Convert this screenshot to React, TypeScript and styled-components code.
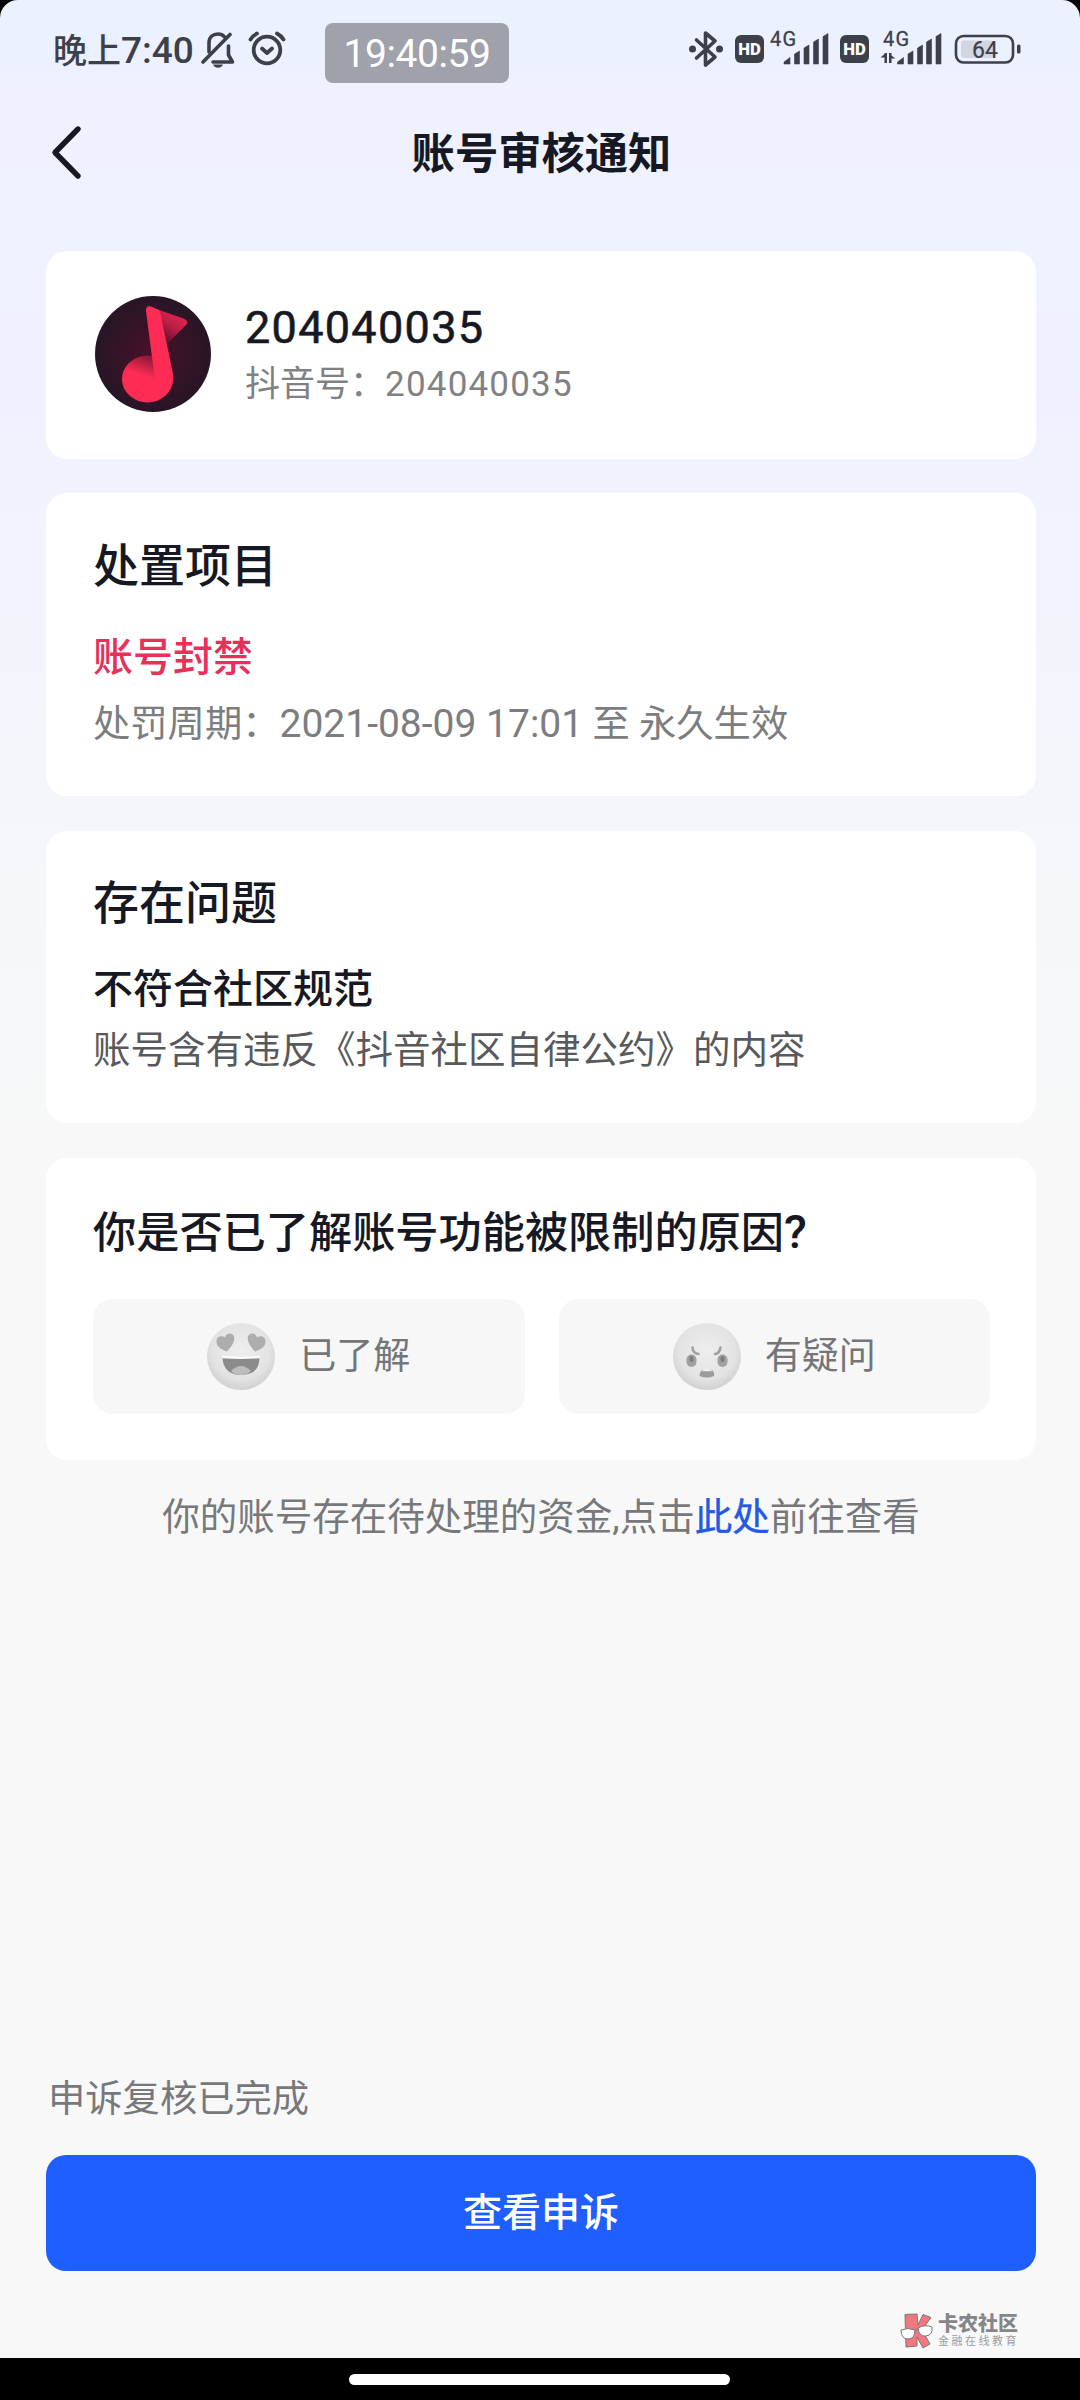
import React from "react";
import styled, { createGlobalStyle } from "styled-components";

const Global = createGlobalStyle`
  * { box-sizing: border-box; }
  html, body { margin: 0; padding: 0; background: #000; }
  body { font-family: Roboto, "Noto Sans CJK SC", sans-serif; }
`;

const Screen = styled.div`
  width: 1080px;
  height: 2400px;
  display: flex;
  flex-direction: column;
  background: #000;
`;

const Page = styled.div`
  height: 2358px;
  display: flex;
  flex-direction: column;
  border-radius: 18px 18px 0 0;
  overflow: hidden;
  background: linear-gradient(180deg, #eaf1ff 0, #edf1ff 70px, #eff1ff 82px, #eff2fe 400px, #f3f5fc 700px, #f7f8f9 1060px, #f8f8f8 1200px);
`;

const StatusBar = styled.header`
  display: flex;
  height: 98px;
  padding: 0 56px 0 53px;
  color: #3d4048;
`;

const Clock = styled.div`
  width: 148px;
  padding-top: 27px;
  font-size: 34px;
  line-height: 48px;
  font-weight: 500;
  white-space: nowrap;
`;

const StatusIcons = styled.div<{ $top: number }>`
  display: flex;
  gap: 13px;
  padding-top: ${(p) => p.$top}px;
`;

const TimePill = styled.div`
  width: 184px;
  height: 60px;
  margin: 23px auto 0 39px;
  border-radius: 8px;
  background: #9fa1ab;
  color: #fff;
  font-size: 39px;
  line-height: 62px;
  letter-spacing: -0.4px;
  text-align: center;
`;

const NavBar = styled.div`
  display: grid;
  grid-template-columns: 102px 1fr 99px;
  height: 153px;
  padding: 25px 0 0;
`;

const BackButton = styled.button`
  border: 0;
  padding: 0 0 0 51px;
  background: none;
  height: 60px;
  text-align: left;
`;

const NavTitle = styled.h1`
  margin: 0;
  font-size: 43.3px;
  line-height: 64px;
  font-weight: 700;
  color: #161823;
  text-align: center;
`;

const Content = styled.main`
  flex: 1;
  display: flex;
  flex-direction: column;
  padding: 0 44px 0 46px;
`;

const Card = styled.section<{ $h: number; $gap?: number }>`
  height: ${(p) => p.$h}px;
  margin-bottom: ${(p) => p.$gap ?? 34}px;
  padding: 0 46px 0 47px;
  border-radius: 21px;
  background: #fff;
`;

const Profile = styled.div`
  display: flex;
  align-items: center;
  gap: 34px;
  height: 206px;
  padding-left: 2px;
`;

const Name = styled.div`
  padding-top: 3px;
  font-size: 45px;
  line-height: 56px;
  font-weight: 400;
  letter-spacing: 1.3px;
  color: #161823;
  -webkit-text-stroke: 0.6px #161823;
`;

const Account = styled.div`
  padding-top: 3px;
  font-size: 35px;
  line-height: 52px;
  color: #808184;
`;

const Digits = styled.span<{ $size?: number; $space?: number }>`
  font-size: ${(p) => (p.$size ? p.$size + "px" : "inherit")};
  line-height: 1;
  letter-spacing: ${(p) => p.$space ?? 0}px;
`;

const Text = styled.p<{ $top?: number; $size: number; $weight?: number; $color: string }>`
  margin: 0;
  padding-top: ${(p) => p.$top ?? 0}px;
  font-size: ${(p) => p.$size}px;
  line-height: 56px;
  font-weight: ${(p) => p.$weight ?? 400};
  color: ${(p) => p.$color};
  white-space: nowrap;
`;

const Choices = styled.div`
  display: grid;
  grid-template-columns: 1fr 1fr;
  gap: 34px;
  margin-top: 37px;
`;

const Choice = styled.button`
  display: flex;
  align-items: center;
  justify-content: center;
  gap: 24px;
  height: 115px;
  border: 0;
  border-radius: 20px;
  padding: 0;
  background: #f7f7f8;
  color: #747578;
  font: 400 37px/54px Roboto, "Noto Sans CJK SC", sans-serif;
`;

const Notice = styled(Text)`
  text-align: center;
`;

const Link = styled.a`
  color: #2359e6;
  -webkit-text-stroke: 0.4px #2359e6;
`;

const Footer = styled.footer`
  height: 287px;
  padding: 0 44px 0 46px;
`;

const Progress = styled(Text)`
  padding-left: 2px;
`;

const Primary = styled.button`
  display: block;
  width: 100%;
  height: 116px;
  margin-top: 28px;
  border: 0;
  border-radius: 20px;
  padding: 0;
  background: #1f5eff;
  color: #fff;
  font: 500 39px/56px Roboto, "Noto Sans CJK SC", sans-serif;
`;

const Watermark = styled.div`
  display: flex;
  justify-content: flex-end;
  gap: 4px;
  padding: 42px 18px 0 0;
  color: #85868a;
`;

const BrandName = styled.div`
  font-size: 20px;
  line-height: 22px;
  font-weight: 900;
`;

const BrandSub = styled.div`
  font-size: 11px;
  line-height: 14px;
  letter-spacing: 2.5px;
  color: #9b9ca0;
`;

const BrandText = styled.div`
  width: 80px;
  white-space: nowrap;
`;

const GestureBar = styled.div`
  display: flex;
  justify-content: center;
  height: 42px;
  padding: 16px 1px 0 0;
`;

const Handle = styled.div`
  width: 381px;
  height: 11px;
  border-radius: 6px;
  background: #fff;
`;

const INK = "#3d4048";

const BellOff = () => (
  <svg width="34" height="38" viewBox="0 0 34 38" fill="none" stroke={INK} strokeWidth="3.6" strokeLinecap="round">
    <path d="M8 22V13C8 7 12 4 17 4c3 0 5 1 6.500 2.800" />
    <path d="M2 32L29 4.500" />
    <path d="M12 32H31.500L27.500 25V16" strokeLinejoin="round" />
    <path d="M12 34.500h10c-1 2.400-2.800 3.300-5 3.300s-4-.9-5-3.300z" fill={INK} stroke="none" />
  </svg>
);

const Alarm = () => (
  <svg width="38" height="38" viewBox="0 0 38 38" fill="none" stroke={INK} strokeWidth="3.800" strokeLinecap="round" strokeLinejoin="round">
    <circle cx="19" cy="20" r="13.300" />
    <path d="M14 18.500l5 4.500 5-4.500" />
    <path d="M2.500 9.500Q5 5.500 9 3.500M35.500 9.500Q33 5.500 29 3.500" />
  </svg>
);

const SmallText = styled.text`
  font-family: Roboto, sans-serif;
`;

const Signals = () => (
  <svg width="336" height="50" viewBox="0 -8 336 50" fill={INK}>
    <g fill="none" stroke={INK} strokeWidth="3.600" strokeLinejoin="round" strokeLinecap="round">
      <path d="M8.500 11L27 28L17.500 36V4L27 12L8.500 29" />
    </g>
    <circle cx="4.500" cy="20" r="3.500" />
    <circle cx="31.500" cy="20" r="3.500" />
    <rect x="47" y="6" width="29" height="28" rx="6" />
    <SmallText x="61.500" y="25.600" fontSize="16" fontWeight="900" fill="#fff" textAnchor="middle" textLength="22.500" lengthAdjust="spacingAndGlyphs">HD</SmallText>
    <SmallText x="82" y="17.300" fontSize="20" fontWeight="400" textLength="26" stroke={INK} strokeWidth=".3">4G</SmallText>
    <path d="M96 35v-2l6-4.500V35z M106.500 35V25l5-3V35z M116 35V19l5-3V35z M125.500 35V13l5-3V35z M135 35V7.500l5-3V35z" stroke={INK} strokeWidth=".6" strokeLinejoin="round" />
    <rect x="152" y="6" width="29" height="28" rx="6" />
    <SmallText x="166.500" y="25.600" fontSize="16" fontWeight="900" fill="#fff" textAnchor="middle" textLength="22.500" lengthAdjust="spacingAndGlyphs">HD</SmallText>
    <SmallText x="195" y="17.300" fontSize="20" fontWeight="400" textLength="26" stroke={INK} strokeWidth=".3">4G</SmallText>
    <path d="M192.500 28.500l4-3.500V24h2.500v10h-2.500v-5.500z M201 24h2.500v2.500l3.800 3h-3.800V34H201z" />
    <path d="M209.500 35v-2l6-4.500V35z M220 35V25l5-3V35z M229.500 35V19l5-3V35z M238.500 35V13l5-3V35z M248 35V7.500l5-3V35z" stroke={INK} strokeWidth=".6" strokeLinejoin="round" />
    <rect x="268" y="7" width="57" height="26.500" rx="7.500" fill="none" stroke={INK} strokeWidth="2.600" />
    <rect x="273" y="11.500" width="32" height="17.500" rx="3" fill="#d3d6e0" />
    <rect x="329" y="15.500" width="3.500" height="9" rx="1.500" />
    <SmallText x="297" y="28.600" fontSize="23" fontWeight="400" textAnchor="middle" textLength="26" stroke={INK} strokeWidth=".2">64</SmallText>
  </svg>
);

const BackIcon = () => (
  <svg width="34" height="60" viewBox="0 0 34 60" fill="none" stroke="#161823" strokeWidth="5.400" strokeLinecap="round" strokeLinejoin="round">
    <path d="M27 6L4 29.500L27 53" />
  </svg>
);

const Avatar = () => (
  <svg width="116" height="116" viewBox="0 0 116 116">
    <defs>
      <radialGradient id="disc" cx=".5" cy=".5" r=".5">
        <stop offset="0" stopColor="#4c0f2a" />
        <stop offset=".75" stopColor="#2f1526" />
        <stop offset="1" stopColor="#271526" />
      </radialGradient>
      <linearGradient id="flag" x1=".8" y1=".1" x2=".3" y2=".8">
        <stop offset="0" stopColor="#e8264f" />
        <stop offset=".5" stopColor="#c01f46" />
        <stop offset="1" stopColor="#6a1231" />
      </linearGradient>
      <linearGradient id="head" x1=".75" y1=".1" x2=".6" y2=".5">
        <stop offset="0" stopColor="#8c1838" />
        <stop offset="1" stopColor="#fe2c55" />
      </linearGradient>
    </defs>
    <circle cx="58" cy="58" r="58" fill="url(#disc)" />
    <path d="M54 10.500L88.500 22.500Q94 25 91.500 28.500L72 48L62 34z" fill="url(#flag)" />
    <ellipse cx="52.500" cy="83" rx="25.500" ry="23.500" fill="url(#head)" />
    <path d="M51 15Q50.500 9 56 10.500L64 14Q66 18 67 25L78 78Q79 93 69 99L60 84z" fill="#fe2c55" />
  </svg>
);

const FaceDefs = ({ id }: { id: string }) => (
  <defs>
    <radialGradient id={id} cx=".5" cy=".42" r=".6">
      <stop offset="0" stopColor="#eeeeee" />
      <stop offset=".7" stopColor="#e3e3e3" />
      <stop offset="1" stopColor="#cecece" />
    </radialGradient>
  </defs>
);

const LoveFace = () => (
  <svg width="68" height="67" viewBox="0 0 68 67">
    <FaceDefs id="love" />
    <ellipse cx="34" cy="33.500" rx="34" ry="33.500" fill="url(#love)" />
    <path d="M20 28.500C14 26.500 9.500 23.500 9.500 18.500C9.500 13.500 14.500 12 18 14.500C19.500 9.500 25.500 9.500 27 13.500C28.500 18.500 24 24 20 28.500z" fill="#adadae" />
    <path d="M48 28.500C54 26.500 58.500 23.500 58.500 18.500C58.500 13.500 53.500 12 50 14.500C48.500 9.500 42.500 9.500 41 13.500C39.500 18.500 44 24 48 28.500z" fill="#adadae" />
    <path d="M15.500 35H52.500Q52 52 34 52Q16.500 51.500 15.500 35z" fill="#8b8b8c" />
    <path d="M15 32.500Q34 34.500 53 32.500L52.500 35.300Q34 36.500 15.500 35.300z" fill="#fafafa" />
    <path d="M24 48Q34 38 44 48Q40 52 34 52Q28 52 24 48z" fill="#bdbdbe" />
  </svg>
);

const AngryFace = () => (
  <svg width="68" height="67" viewBox="0 0 68 67">
    <FaceDefs id="angry" />
    <ellipse cx="34" cy="33.500" rx="34" ry="33.500" fill="url(#angry)" />
    <path d="M19.500 24.500Q20 30.500 25.500 31M47.500 24.500Q46.500 30.500 42 31" fill="none" stroke="#a0a0a1" strokeWidth="2.600" strokeLinecap="round" />
    <rect x="13.500" y="31.500" width="10" height="12.500" rx="5" fill="#a0a0a1" />
    <rect x="44.500" y="31.500" width="10" height="12.500" rx="5" fill="#a0a0a1" />
    <rect x="16.500" y="33" width="4" height="6" rx="2" fill="#7c7c7d" />
    <rect x="47.500" y="33" width="4" height="6" rx="2" fill="#7c7c7d" />
    <path d="M29 47Q34 45.500 39 47Q42 50 41 53Q34 56 26.500 53Q26 50 29 47z" fill="#9c9c9d" />
    <path d="M28.500 48Q34 43.500 39.500 48Q34 48.500 28.500 48z" fill="#f2f2f2" />
  </svg>
);

const BrandLogo = () => (
  <svg width="34" height="36" viewBox="0 0 34 36">
    <path d="M5 1.500L17 1l1 11L23 1.500l8 3L22 17l8 14-7 4-6-11 0 9-11 1z" fill="#f0787f" stroke="#77777b" strokeWidth="1" />
    <g fill="#fff" stroke="#77777b" strokeWidth="1">
      <path d="M1 17q7-3 14 0q0 9-7 9t-7-9z" />
      <path d="M18 15q7-4 14-1q1 8-6 9t-8-8z" />
      <path d="M15 18q1.500-1.500 3-1.500" fill="none" />
    </g>
  </svg>
);

export default function App() {
  return (
    <>
      <Global />
      <Screen>
        <Page>
          <StatusBar>
            <Clock>
              晚上<Digits $size={37}>7:40</Digits>
            </Clock>
            <StatusIcons $top={30}>
              <BellOff />
              <Alarm />
            </StatusIcons>
            <TimePill>19:40:59</TimePill>
            <StatusIcons $top={21}>
              <Signals />
            </StatusIcons>
          </StatusBar>
          <NavBar>
            <BackButton aria-label="返回">
              <BackIcon />
            </BackButton>
            <NavTitle>账号审核通知</NavTitle>
          </NavBar>
          <Content>
            <Card $h={208}>
              <Profile>
                <Avatar />
                <div>
                  <Name>204040035</Name>
                  <Account>
                    抖音号：<Digits $space={1.2}>204040035</Digits>
                  </Account>
                </div>
              </Profile>
            </Card>
            <Card $h={303} $gap={35}>
              <Text $top={45} $size={46} $weight={500} $color="#161823">处置项目</Text>
              <Text $top={36} $size={40} $weight={500} $color="#e9305a">账号封禁</Text>
              <Text $top={10} $size={37.3} $color="#7c7d80">
                处罚周期：<Digits $size={39}>2021-08-09 17:01</Digits> 至 永久生效
              </Text>
            </Card>
            <Card $h={292} $gap={35}>
              <Text $top={44} $size={46} $weight={500} $color="#161823">存在问题</Text>
              <Text $top={31} $size={40} $weight={500} $color="#161823">不符合社区规范</Text>
              <Text $top={4} $size={37.5} $color="#58595c">账号含有违反《抖音社区自律公约》的内容</Text>
            </Card>
            <Card $h={302} $gap={29}>
              <Text $top={48} $size={43.2} $weight={500} $color="#161823">
                你是否已了解账号功能被限制的原因<Digits $size={47}>?</Digits>
              </Text>
              <Choices>
                <Choice>
                  <LoveFace />
                  已了解
                </Choice>
                <Choice>
                  <AngryFace />
                  有疑问
                </Choice>
              </Choices>
            </Card>
            <Notice $size={37.5} $color="#77787b">
              你的账号存在待处理的资金,点击<Link>此处</Link>前往查看
            </Notice>
          </Content>
          <Footer>
            <Progress $size={37.3} $color="#77787b">申诉复核已完成</Progress>
            <Primary>查看申诉</Primary>
            <Watermark>
              <BrandLogo />
              <BrandText>
                <BrandName>卡农社区</BrandName>
                <BrandSub>金融在线教育</BrandSub>
              </BrandText>
            </Watermark>
          </Footer>
        </Page>
        <GestureBar>
          <Handle />
        </GestureBar>
      </Screen>
    </>
  );
}
